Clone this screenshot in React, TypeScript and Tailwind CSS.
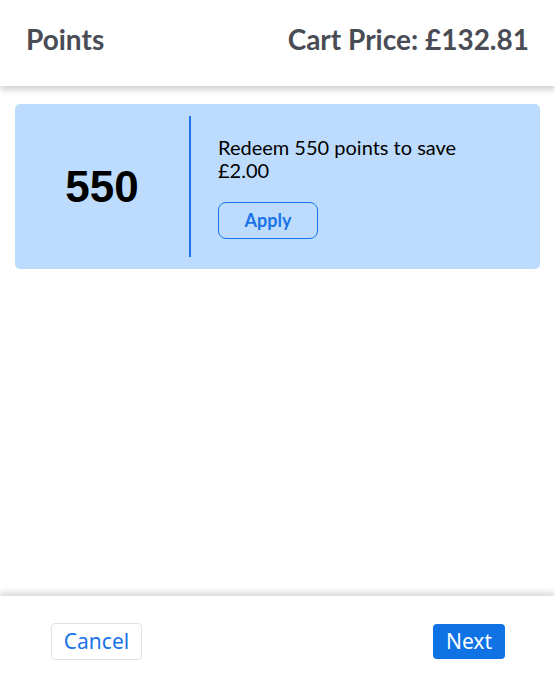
import React from 'react';

const lato = { fontFamily: 'Lato, "Noto Sans", sans-serif' };

function Header() {
  return (
    <header
      className="relative z-10 flex h-[86px] shrink-0 items-center justify-between bg-white px-[26px] pb-2 shadow-[0_4px_6px_rgba(0,0,0,0.18)]"
      style={lato}
    >
      <h1 className="text-[28px] font-bold text-[#494c55]">Points</h1>
      <div className="text-[28px] font-bold text-[#494c55]">Cart Price: £132.81</div>
    </header>
  );
}

function RedeemCard({ points, saving }: { points: number; saving: string }) {
  return (
    <div className="flex h-[165px] rounded-[5px] bg-[#bddcfd] py-3">
      <div className="flex w-[174px] items-center justify-center">
        <span className="font-['Liberation_Sans',Arial,sans-serif] text-[44px] font-bold text-black">
          {points}
        </span>
      </div>
      <div className="w-[2px] bg-[#1a73e8]" />
      <div className="flex flex-col justify-center pl-[27px] pt-[2px]" style={lato}>
        <p className="w-[260px] text-[20px] leading-[23px] text-black">
          Redeem {points} points to save {saving}
        </p>
        <button className="mt-[20px] h-[37px] w-[100px] rounded-[8px] border border-[#1a73e8] text-[18px] font-bold text-[#1a73e8]">
          Apply
        </button>
      </div>
    </div>
  );
}

function Footer() {
  return (
    <footer
      className="relative z-10 flex h-[87px] shrink-0 items-center justify-between bg-white pl-[51px] pr-[50px] pt-1 shadow-[0_-4px_6px_rgba(0,0,0,0.14)]"
      style={{ fontFamily: '"Noto Sans", sans-serif' }}
    >
      <button className="h-[37px] w-[91px] rounded-[4px] border border-[#dfe3e8] bg-white text-[21px] text-[#1a73e8]">
        Cancel
      </button>
      <button className="h-[35px] w-[72px] rounded-[4px] bg-[#0f72e5] text-[21px] text-white">
        Next
      </button>
    </footer>
  );
}

export default function App() {
  return (
    <div className="flex h-screen flex-col bg-white">
      <Header />
      <main className="flex-1 px-[15px] pt-[18px]">
        <RedeemCard points={550} saving="£2.00" />
      </main>
      <Footer />
    </div>
  );
}
